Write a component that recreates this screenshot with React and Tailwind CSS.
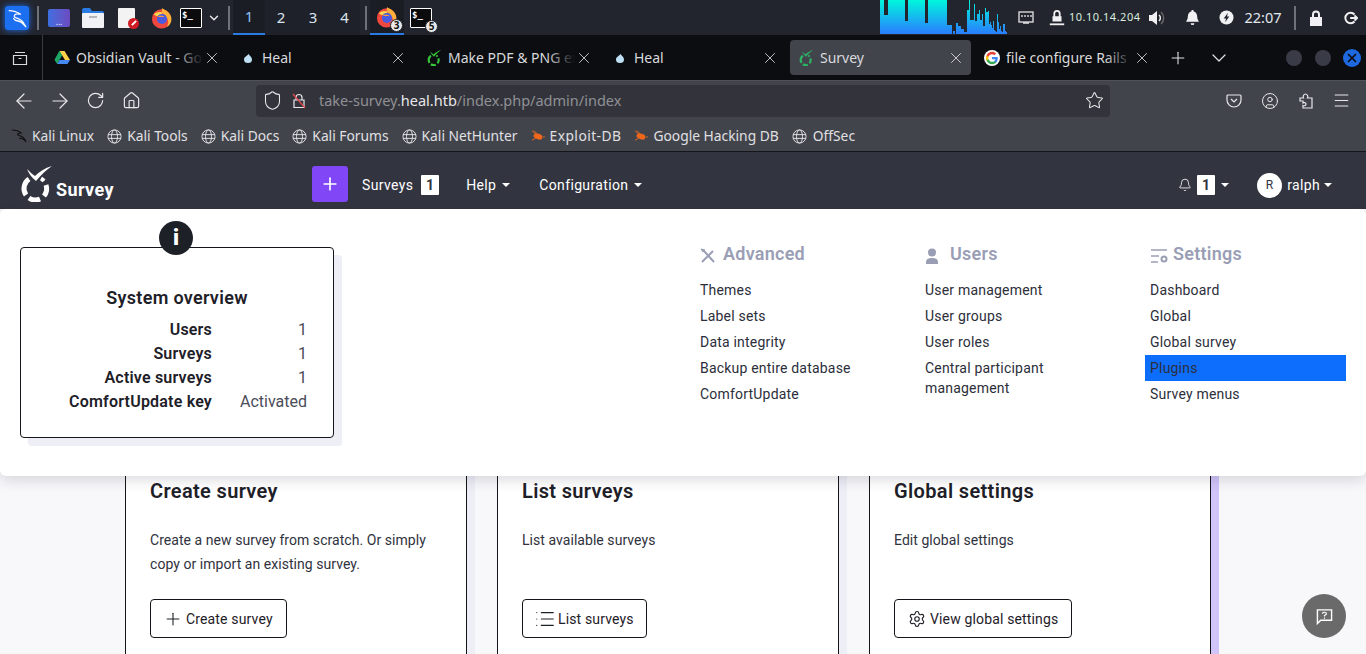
import { ArrowLeft, ArrowRight, Bell, ChevronDown, CircleUser, House, List, Menu, Plus, RotateCw, Settings, Shield, Star, X } from "lucide-react";

// Network graph of the panel, as [width, height] runs of one pixel bars
const graphRuns = [
  [4,35],[4,19],[17,35],[3,13],[17,35],[3,11],[19,35],[5,9],[1,0],[2,3],[1,0],[2,11],[3,8],[3,5],[3,2],
  [2,24],[1,34],[4,14],[1,30],[2,13],[2,20],[1,24],[2,14],[1,20],[2,8],[1,26],[2,22],[1,23],
  [1,10],[1,12],[1,9],[1,6],[1,13],[1,4],[1,3],[1,2],[1,20],[1,12],[1,5],[1,8],[1,3],[1,2],[2,10],[1,3],[1,2],[1,0],
];
const graphBars = graphRuns.flatMap(([w, h]) => Array(w).fill(h));

function Caret() {
  return <span className="ml-[6px] inline-block w-0 h-0 border-x-[4px] border-x-transparent border-t-[4px] border-t-white" />;
}

function LimeLogo({ className }) {
  return (
    <svg viewBox="0 0 32 36" className={className} fill="none" stroke="currentColor">
      <path d="M9 13 A11.500 11.500 0 0 0 6 29" strokeWidth="5" />
      <path d="M9 32 A11.500 11.500 0 0 0 20 33" strokeWidth="5" />
      <path d="M24 30 A11.500 11.500 0 0 0 26 19" strokeWidth="5" />
      <path d="M24 15 A11.500 11.500 0 0 0 21 12.500" strokeWidth="4" />
      <path d="M7 3 C10 6 12 8 15 10 C19 6 25 2 32 0 C26 4 21 9 16 15 C12 12 9 8 7 3Z" fill="currentColor" stroke="none" />
    </svg>
  );
}

function Firefox({ className }) {
  return (
    <svg viewBox="0 0 24 24" className={className}>
      <circle cx="11.500" cy="13" r="10.500" fill="#f0483e" />
      <path d="M12 1c2 2 8 3 10 10 1 5-1 9-5 11 3-4 2-9-1-12-2-2-5-3-4-9Z" fill="#ffb03a" />
      <path d="M3 8c3-3 7-3 10-2l-2 3-5 1Z" fill="#ffd44a" />
      <circle cx="12" cy="13" r="5.500" fill="#4a5be0" />
      <path d="M7 11c2-2 6-2 8 0-2 0-5 0-8 0Z" fill="#ff9b3a" />
    </svg>
  );
}

function TerminalIcon({ className }) {
  return (
    <div className={`border border-white bg-[#0b0b0e] rounded-[1px] text-white font-['DejaVu_Sans_Mono',monospace] font-bold text-[9px] leading-[12px] pl-[1px] ${className}`}>$_</div>
  );
}

function Drive() {
  return (
    <svg viewBox="0 0 16 15" className="w-4 h-[15px] shrink-0">
      <path d="M5.500 1h5L6 9H1Z" fill="#1fa463" />
      <path d="M10.500 1 16 10h-5L5.500 1Z" fill="#ffd04b" />
      <path d="M3 14 5.500 10H16l-2.500 4Z" fill="#4688f4" />
      <path d="M5.500 1 8 5 3.200 14 0.500 10Z" fill="#1fa463" />
    </svg>
  );
}

function Drop() {
  return (
    <svg viewBox="0 0 16 16" className="w-4 h-4 shrink-0">
      <path d="M8.500 4c1 1.500 3.500 3 3.500 5.500a4 3.500 0 0 1-8 0C4 7 7.500 5.500 8.500 4Z" fill="#bfe0f5" />
    </svg>
  );
}

function Google() {
  return (
    <svg viewBox="0 0 18 18" className="w-4 h-4 shrink-0 rounded-full bg-white">
      <path d="M15.500 9.200c0-.5 0-1-.1-1.400H9v2.700h3.700c-.2.900-.6 1.600-1.300 2.100v1.700h2.200c1.200-1.200 1.900-3 1.900-5.100Z" fill="#4285f4" />
      <path d="M9 16c1.800 0 3.400-.6 4.600-1.700l-2.200-1.700c-.6.400-1.400.7-2.400.7-1.800 0-3.300-1.200-3.900-2.900H2.900v1.800C4.100 14.500 6.400 16 9 16Z" fill="#34a853" />
      <path d="M5.100 10.400c-.3-.9-.3-1.900 0-2.800V5.800H2.900c-.9 1.800-.9 4.600 0 6.400Z" fill="#fbbc05" />
      <path d="M9 4.800c1 0 1.900.4 2.600 1l2-2C12.400 2.700 10.800 2 9 2 6.400 2 4.100 3.500 2.900 5.800l2.200 1.800C5.700 6 7.200 4.800 9 4.800Z" fill="#ea4335" />
    </svg>
  );
}

function Tab({ icon, title, active, fade }) {
  return (
    <div className="w-[186px] shrink-0 pr-[5px] h-[35px]">
      <div className={`h-full flex items-center pl-[8px] pr-[6px] rounded-[4px] ${active ? "bg-[#42444c]" : ""}`}>
        {icon}
        <span className="relative ml-[6px] flex-1 min-w-0 overflow-hidden whitespace-nowrap text-[14px] text-[#d8d9dc]">
          {title}
          {fade && <span className="absolute right-0 top-0 h-full w-[28px] bg-gradient-to-r from-transparent to-[#0c0d10]" />}
        </span>
        <X size={18} strokeWidth={1.100} className="text-[#e4e4e6] shrink-0" />
      </div>
    </div>
  );
}

function Bug() {
  return (
    <svg viewBox="0 0 15 13" className="w-[14px] h-[12px] shrink-0">
      <path d="M1 1l4 3M3 0.500l3 3M1 11l4-2M13 7.500h2" stroke="#e06a20" strokeWidth="1" />
      <ellipse cx="7.500" cy="7" rx="5" ry="3" fill="#f0671c" transform="rotate(20 7.500 7)" />
    </svg>
  );
}

function Bookmark({ icon, label, labelClass = "" }) {
  return (
    <div className="flex items-center gap-[5px] whitespace-nowrap">
      {icon}
      <span className={labelClass}>{label}</span>
    </div>
  );
}

function Globe() {
  return (
    <svg viewBox="0 0 16 16" className="w-[15px] h-[15px] shrink-0" fill="none" stroke="#e3e3e6" strokeWidth="1">
      <circle cx="8" cy="8" r="7" />
      <ellipse cx="8" cy="8" rx="3.200" ry="7" />
      <path d="M1 6h14M1 10h14" />
    </svg>
  );
}

function MenuColumn({ icon, title, items }) {
  return (
    <div className="w-[225px] shrink-0">
      <div className="flex items-center h-[24px] pl-[5px] text-[18px] font-semibold text-[#9a9eb5] leading-[24px] tracking-[0.25px]">
        {icon}
        {title}
      </div>
      <ul className="mt-[11px] w-[201px] text-[14px] text-[#2c2e3a] tracking-[0.2px]">
        {items.map((item) => (
          <li key={item} className={`px-[5px] py-[3px] leading-[20px] ${item === "Plugins" ? "bg-[#0d6efd]" : ""}`}>{item}</li>
        ))}
      </ul>
    </div>
  );
}

function SurveyCard({ title, text, button, icon, shadow, buttonClass }) {
  return (
    <div className={`w-[342px] h-[300px] shrink-0 bg-white border-x border-[#14151a] px-[24px] ${shadow}`}>
      <h3 className="text-[20px] leading-[30px] font-semibold text-[#1e2028] tracking-[0.35px]">{title}</h3>
      <p className="mt-[22px] h-[48px] text-[14px] leading-[24px] text-[#30323d] tracking-[0.05px]">{text}</p>
      <button className={`mt-[23px] h-[39px] pt-[1px] flex items-center rounded-[4px] border border-[#14151a] text-[14px] text-[#1e2028] tracking-[0.15px] ${buttonClass}`}>
        {icon}
        {button}
      </button>
    </div>
  );
}

function StatRow({ label, value }) {
  return (
    <div className="flex h-[24px] items-center text-[16px]">
      <span className="w-[191px] text-right font-semibold text-[#1e2028] tracking-[0.2px]">{label}</span>
      <span className="flex-1 text-right pr-[26px] text-[#4a4c58]">{value}</span>
    </div>
  );
}

export default function App() {
  return (
    <div className="relative h-[654px] overflow-hidden bg-[#f8f8fb] font-['Roboto',sans-serif]">
      {/* Desktop panel */}
      <div className="h-[35px] bg-[#23252e] flex items-center text-[#d9e4ee] font-['Noto_Sans',sans-serif]">
        <div className="ml-[5px] w-[24px] h-[24px] rounded-[3px] bg-[#1c6ff0] shadow-[0_0_6px_#1c6ff0] flex items-center justify-center">
          <svg viewBox="0 0 24 24" className="w-[22px] h-[22px]" fill="none" stroke="white" strokeWidth="1.400">
            <path d="M3 4c5 0 9 1 13 4-4-1-7 0-7 2 0 3 8 1 11 9 1 1 1 2 2 3-4-5-6-7-10-7-2 0-3-1-4-3" />
          </svg>
        </div>
        <div className="ml-[8px] w-[2px] h-[24px] bg-[#6f7178]" />
        <div className="ml-[9px] w-[22px] h-[18px] rounded-[2px] bg-gradient-to-r from-[#3c6fe0] to-[#6a4bc0] flex items-end justify-center pb-[1px] text-[8px] leading-[8px] text-white">...</div>
        <svg viewBox="0 0 22 20" className="ml-[12px] w-[22px] h-[20px]">
          <path d="M0 2q0-2 2-2h6l2 3h10q2 0 2 2v2H0Z" fill="#2a7ae4" />
          <rect y="5" width="22" height="15" rx="1" fill="#f1f1f3" />
          <rect x="7" y="8" width="8" height="2" fill="#b5b5ba" />
        </svg>
        <div className="relative ml-[14px] w-[17px] h-[20px] bg-[#f3f3f3] rounded-[1px]">
          <span className="absolute -right-[4px] bottom-[-1px] w-[11px] h-[11px] rounded-full bg-[#d01c24] flex items-center justify-center">
            <span className="w-[6px] h-[2px] bg-white -rotate-45" />
          </span>
        </div>
        <Firefox className="ml-[16px] w-[22px] h-[22px]" />
        <TerminalIcon className="ml-[7px] w-[22px] h-[20px]" />
        <ChevronDown size={14} strokeWidth={2.500} className="ml-[5px] text-[#e6e6e8]" />
        <div className="ml-[7px] w-[2px] h-[24px] bg-[#6f7178]" />
        <div className="ml-[3px] flex h-[35px] text-[15px]">
          <div className="w-[32px] flex items-center justify-center bg-[#1b1d25] border-b-[2px] border-[#2a7ae4] text-[#8cc4f5]">1</div>
          <div className="w-[32px] flex items-center justify-center bg-[#1f212a]">2</div>
          <div className="w-[32px] flex items-center justify-center bg-[#1f212a]">3</div>
          <div className="w-[31px] flex items-center justify-center bg-[#1f212a]">4</div>
        </div>
        <div className="ml-[5px] w-[2px] h-[24px] bg-[#6f7178]" />
        <div className="relative ml-[3px] w-[34px] h-[35px] flex items-center justify-center bg-[#1b1d25] border-b-[2px] border-[#2a7ae4]">
          <Firefox className="w-[22px] h-[22px]" />
          <span className="absolute right-[1px] bottom-[1px] w-[13px] h-[13px] rounded-full bg-[#e8e8e8] border border-[#23252e] text-[#111] text-[10px] leading-[11px] font-bold text-center">3</span>
        </div>
        <div className="relative ml-[6px]">
          <TerminalIcon className="w-[22px] h-[20px]" />
          <span className="absolute -right-[6px] -bottom-[5px] w-[13px] h-[13px] rounded-full bg-[#e8e8e8] border border-[#23252e] text-[#111] text-[10px] leading-[11px] font-bold text-center">5</span>
        </div>
        <svg width="128" height="35" className="ml-[448px] shrink-0">
          <defs>
            <linearGradient id="graphFill" x1="0" y1="0" x2="0" y2="34" gradientUnits="userSpaceOnUse">
              <stop offset="0" stopColor="#00f7dc" />
              <stop offset="1" stopColor="#2a7cff" />
            </linearGradient>
          </defs>
          {graphBars.map((h, i) => (
            <rect key={i} x={i} y={34 - h} width="1" height={h} fill="url(#graphFill)" />
          ))}
        </svg>
        <svg viewBox="0 0 16 14" fill="none" stroke="#e6e6e8" strokeWidth="1.300" className="ml-[10px] w-[16px] h-[14px]">
          <rect x="1" y="1" width="14" height="10" />
          <path d="M4 4v2M7 4v2M10 4v2M13 4v2M5 12h6" />
        </svg>
        <svg viewBox="0 0 16 20" className="ml-[15px] w-[16px] h-[18px]" fill="#f1f1f3">
          <path d="M4 8V5a4 4 0 0 1 8 0v3h1v6H3V8Zm2 0h4V5a2 2 0 0 0-4 0Z" />
          <rect x="0" y="16" width="16" height="2" />
        </svg>
        <span className="ml-[4px] text-[11px] tracking-[0.5px] text-[#d9ecdf] whitespace-nowrap">10.10.14.204</span>
        <svg viewBox="0 0 18 18" className="ml-[8px] w-[18px] h-[18px]" fill="none">
          <path d="M1 6h3l5-4v14l-5-4H1Z" fill="#f1f1f3" />
          <path d="M11 6a4 4 0 0 1 0 6" stroke="#f1f1f3" strokeWidth="1.500" />
          <path d="M13 3a8 8 0 0 1 0 12" stroke="#666" strokeWidth="1.500" />
        </svg>
        <svg viewBox="0 0 16 16" className="ml-[19px] w-[15px] h-[15px]" fill="#f1f1f3">
          <path d="M8 0a1.200 1.200 0 0 1 1.200 1.500C11.500 2 13 4 13 7c0 3 1 4 2 5.500H1C2 11 3 10 3 7c0-3 1.500-5 3.800-5.500A1.200 1.200 0 0 1 8 0ZM6 14h4a2 2 0 0 1-4 0Z" />
        </svg>
        <svg viewBox="0 0 16 16" className="ml-[19px] w-[15px] h-[15px]">
          <circle cx="8" cy="8" r="7.500" fill="#f1f1f3" />
          <path d="M9.500 3 5 9h2.500L6.500 13 11 7H8.500Z" fill="#23252e" />
        </svg>
        <span className="ml-[10px] text-[14.500px] text-[#e2e8ee]">22:07</span>
        <div className="ml-[12px] w-[2px] h-[24px] bg-[#6f7178]" />
        <svg viewBox="0 0 14 16" className="ml-[13px] w-[14px] h-[16px]" fill="#f1f1f3">
          <path d="M3 7V4.500a4 4 0 0 1 8 0V7h2v9H1V7Zm2 0h4V4.500a2 2 0 0 0-4 0Z" />
        </svg>
        <svg viewBox="0 0 16 16" className="ml-[21px] w-[14px] h-[14px]" fill="none" stroke="#f1f1f3" strokeWidth="2.200">
          <path d="M12 4a6 6 0 1 0 0 8M7 8h8M12 5l3 3-3 3" />
        </svg>
      </div>

      {/* Browser tab strip */}
      <div className="h-[45px] bg-[#0c0d10] flex font-['Noto_Sans',sans-serif]">
        <div className="w-[43px] h-full shrink-0 border-r border-[#3a3b42] flex items-center justify-center pr-[3px]">
          <svg viewBox="0 0 16 16" className="w-[16px] h-[16px]" fill="none" stroke="#d8d9dc" strokeWidth="1.200">
            <path d="M3 2.500h10M1.500 5.500h13v9h-13ZM6.500 8.500h3" />
          </svg>
        </div>
        <div className="ml-[3px] pt-[5px] flex">
          <Tab icon={<Drive />} title="Obsidian Vault - Go" fade />
          <Tab icon={<Drop />} title="Heal" />
          <Tab icon={<LimeLogo className="w-4 h-4 shrink-0 text-[#35c53a]" />} title="Make PDF & PNG ex" fade />
          <Tab icon={<Drop />} title="Heal" />
          <Tab icon={<LimeLogo className="w-4 h-4 shrink-0 text-[#2db564]" />} title="Survey" active />
          <Tab icon={<Google />} title="file configure Rails" fade />
          <div className="flex items-center h-[35px] text-[#e4e4e6]">
            <Plus size={20} strokeWidth={1.300} className="ml-[6px]" />
            <ChevronDown size={24} strokeWidth={1.200} className="ml-[19px]" />
            <span className="ml-[55px] w-[16px] h-[16px] rounded-full bg-[#393c47]" />
            <span className="ml-[13px] w-[16px] h-[16px] rounded-full bg-[#393c47]" />
            <span className="ml-[12px] w-[18px] h-[18px] rounded-full bg-[#1f69e0] flex items-center justify-center">
              <X size={14} strokeWidth={3} className="text-[#0c0d10]" />
            </span>
          </div>
        </div>
      </div>

      {/* Browser toolbar */}
      <div className="h-[40px] bg-[#42444c] border-t border-[#50525a] flex items-center text-[#e8e8ea] font-['Noto_Sans',sans-serif]">
        <ArrowLeft size={24} strokeWidth={1.200} className="ml-[12px]" />
        <ArrowRight size={24} strokeWidth={1.200} className="ml-[12px]" />
        <RotateCw size={19} strokeWidth={1.500} className="ml-[14px]" />
        <House size={19} strokeWidth={1.500} className="ml-[17px]" />
        <div className="ml-[115px] w-[854px] h-[32px] rounded-[4px] bg-[#33343b] flex items-center">
          <Shield size={21} strokeWidth={1.200} className="ml-[6px]" />
          <svg viewBox="0 0 14 16" className="ml-[9px] w-[14px] h-[16px]" fill="none" stroke="#e8e8ea" strokeWidth="1.200">
            <path d="M4 7V4.500a3 3 0 0 1 6 0V7M2 7h10v7.500H2Z" />
            <path d="M1 1l12 14" stroke="#e5484d" />
          </svg>
          <span className="ml-[13px] text-[14.500px] text-[#8f9095] whitespace-nowrap">
            take-survey.<span className="text-[#e8e8ea]">heal.htb</span>/index.php/admin/index
          </span>
          <Star size={19} strokeWidth={1.300} className="ml-auto mr-[6px]" />
        </div>
        <svg viewBox="0 0 16 16" className="ml-[116px] w-[16px] h-[16px]" fill="none" stroke="#e8e8ea" strokeWidth="1.200">
          <path d="M2 2h12q1 0 1 1v4a7 7 0 0 1-14 0V3q0-1 1-1ZM5 6l3 3 3-3" />
        </svg>
        <CircleUser size={18} strokeWidth={1.300} className="ml-[19px]" />
        <svg viewBox="0 0 14 16" className="ml-[20px] w-[14px] h-[16px]" fill="none" stroke="#e8e8ea" strokeWidth="1.200">
          <path d="M1 5h3.500C3.500 3 5 1 6.500 1S9.500 3 8.500 5H13v10H4v-2.500c2 .8 3-.5 3-1.500S6 9 4 10V8H1Z" />
        </svg>
        <Menu size={19} strokeWidth={1.300} className="ml-[19px]" />
      </div>

      {/* Bookmarks bar */}
      <div className="h-[31px] pt-[1px] bg-[#42444c] flex items-center pl-[11px] gap-[13px] text-[13.800px] text-[#e0e0e3] font-['Noto_Sans',sans-serif]">
        <Bookmark
          label="Kali Linux"
          icon={
            <svg viewBox="0 0 16 16" className="w-[16px] h-[16px] shrink-0" fill="none" stroke="#111" strokeWidth="1.200">
              <path d="M1 2c4 0 7 1 9 3-3 0-4 1-3 2 2 1 6 1 8 7-2-3-4-4-7-4" />
            </svg>
          }
        />
        <Bookmark icon={<Globe />} label="Kali Tools" />
        <Bookmark icon={<Globe />} label="Kali Docs" />
        <Bookmark icon={<Globe />} label="Kali Forums" />
        <Bookmark icon={<Globe />} label="Kali NetHunter" />
        <Bookmark icon={<Bug />} label="Exploit-DB" labelClass="tracking-[0.45px]" />
        <Bookmark icon={<Bug />} label="Google Hacking DB" />
        <Bookmark icon={<Globe />} label="OffSec" labelClass="ml-[1px]" />
      </div>

      {/* Site navbar */}
      <div className="h-[58px] bg-[#32343f] border-t border-[#14151a] flex text-white text-[14px] tracking-[0.35px]">
        <LimeLogo className="ml-[20px] mt-[14px] w-[32px] h-[36px] shrink-0" />
        <span className="ml-[4px] mt-[26px] text-[18px] leading-[24px] font-bold tracking-[0.4px]">Survey</span>
        <div className="ml-[198px] mt-[14px] w-[36px] h-[36px] rounded-[3px] bg-[#8146f6] flex items-center justify-center">
          <Plus size={20} strokeWidth={2} />
        </div>
        <div className="ml-[14px] h-[20px] mt-[23px] flex items-center">
          Surveys
          <span className="ml-[8px] w-[18px] h-[20px] bg-white rounded-[1px] text-[#32343f] font-bold text-center leading-[20px]">1</span>
        </div>
        <div className="ml-[27px] h-[20px] mt-[23px] flex items-center">Help<Caret /></div>
        <div className="ml-[29px] h-[20px] mt-[23px] flex items-center">Configuration<Caret /></div>
        <div className="ml-auto mr-[34px] flex items-center h-[20px] mt-[23px]">
          <Bell size={14} strokeWidth={1.400} />
          <span className="ml-[5px] w-[18px] h-[20px] bg-white rounded-[1px] text-[#32343f] font-bold text-center leading-[20px]">1</span>
          <Caret />
          <span className="ml-[28px] w-[25px] h-[25px] rounded-full bg-white text-[#32343f] text-[12px] text-center leading-[25px]">R</span>
          <span className="ml-[5px] mr-[-2px]">ralph</span>
          <Caret />
        </div>
      </div>

      {/* Configuration dropdown */}
      <div className="relative z-10 h-[267px] bg-white rounded-[6px] shadow-[0_4px_14px_rgba(30,32,50,0.16)] flex items-start">
        <div className="relative ml-[20px] mt-[38px] w-[314px] h-[191px] shrink-0 rounded-[4px] border border-[#14151a] bg-white shadow-[8px_8px_0_#eeeef7] pt-[38px]">
          <div className="absolute left-[138px] -top-[27px] w-[34px] h-[34px] rounded-full bg-[#1e2028] flex items-center justify-center">
            <span className="text-white text-[22px] font-black leading-none">i</span>
          </div>
          <h4 className="text-center text-[18px] leading-[24px] font-semibold text-[#1e2028] tracking-[0.3px]">System overview</h4>
          <div className="mt-[8px]">
            <StatRow label="Users" value="1" />
            <StatRow label="Surveys" value="1" />
            <StatRow label="Active surveys" value="1" />
            <StatRow label="ComfortUpdate key" value="Activated" />
          </div>
        </div>
        <div className="ml-[361px] mt-[33px] flex">
          <MenuColumn
            title="Advanced"
            icon={
              <svg viewBox="0 0 16 16" className="w-[16px] h-[16px] mr-[7px] mt-[3px]" fill="none" stroke="#9a9eb5" strokeWidth="2">
                <path d="M2 14 13 3M4 3l10 11" />
                <path d="M1 1l4 1-2 2Z" fill="#9a9eb5" strokeWidth="1" />
              </svg>
            }
            items={["Themes", "Label sets", "Data integrity", "Backup entire database", "ComfortUpdate"]}
          />
          <MenuColumn
            title="Users"
            icon={
              <svg viewBox="0 0 14 16" className="w-[14px] h-[16px] mr-[11px] mt-[4px]" fill="#9a9eb5">
                <circle cx="7" cy="4.500" r="4" />
                <path d="M1 16v-2q0-4 6-4t6 4v2Z" />
              </svg>
            }
            items={["User management", "User groups", "User roles", "Central participant management"]}
          />
          <MenuColumn
            title="Settings"
            icon={
              <svg viewBox="0 0 18 16" className="w-[18px] h-[16px] mr-[5px] mt-[3px]" fill="none" stroke="#9a9eb5" strokeWidth="1.500">
                <path d="M1 2h16M1 8h8M1 14h7" />
                <circle cx="14" cy="11" r="2.500" strokeWidth="2" />
              </svg>
            }
            items={["Dashboard", "Global", "Global survey", "Plugins", "Survey menus"]}
          />
        </div>
      </div>

      {/* Dashboard cards behind the dropdown */}
      <div className="pl-[125px] flex gap-[30px]">
        <SurveyCard
          title="Create survey"
          text="Create a new survey from scratch. Or simply copy or import an existing survey."
          button="Create survey"
          icon={<Plus size={20} strokeWidth={1.300} className="mr-[3px]" />}
          shadow="shadow-[8px_0_0_#eeeef7]"
          buttonClass="w-[137px] pl-[12px]"
        />
        <SurveyCard
          title="List surveys"
          text="List available surveys"
          button="List surveys"
          icon={<List size={22} strokeWidth={1.200} className="mr-[2px]" />}
          shadow="shadow-[8px_0_0_#eeeef7]"
          buttonClass="w-[125px] pl-[11px]"
        />
        <SurveyCard
          title="Global settings"
          text="Edit global settings"
          button="View global settings"
          icon={<Settings size={18} strokeWidth={1.500} className="mr-[4px]" />}
          shadow="shadow-[8px_0_0_#d1c4fa]"
          buttonClass="w-[178px] pl-[13px]"
        />
      </div>

      {/* Feedback button */}
      <div className="absolute left-[1302px] top-[594px] w-[44px] h-[44px] rounded-full bg-[#6a6a6a] flex items-center justify-center">
        <svg viewBox="0 0 18 18" className="w-[17px] h-[17px]" fill="none" stroke="white" strokeWidth="1.500">
          <path d="M1.500 2h15v11H5l-3.500 3.500Z" />
          <path d="M7 6q0-1.500 2-1.500t2 1.500q0 1-2 2v1M9 10v1.500" strokeWidth="1.300" />
        </svg>
      </div>
    </div>
  );
}
